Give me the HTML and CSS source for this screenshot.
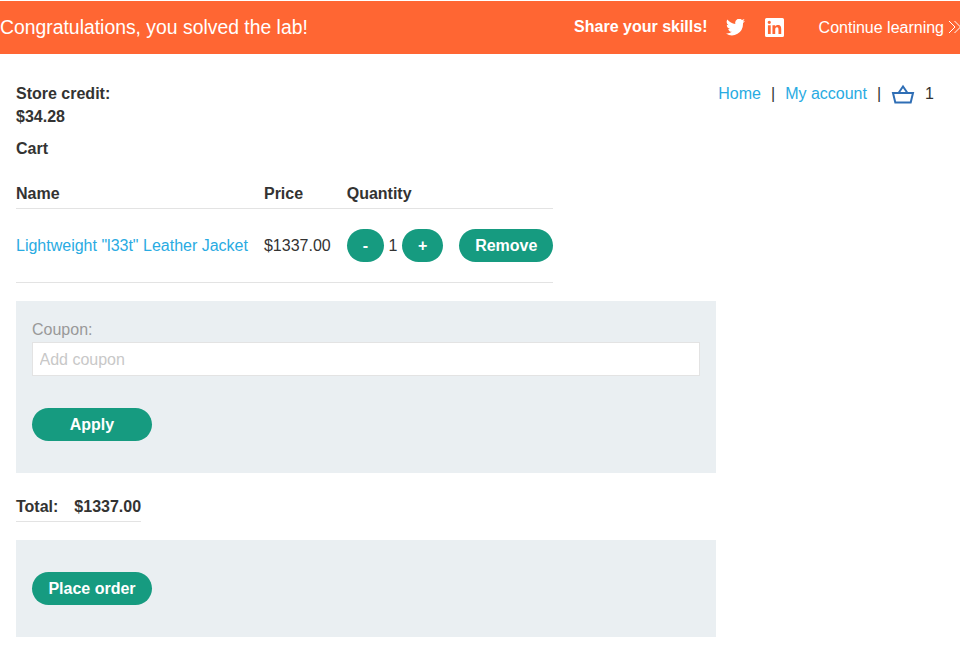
FILE: index.html
```
<!DOCTYPE html>
<html lang="en">
<head>
<meta charset="utf-8">
<title>Cart</title>
<link rel="stylesheet" href="styles.css">
</head>
<body>
<header class="banner">
  <p class="banner-title">Congratulations, you solved the lab!</p>
  <div class="share">
    <span class="share-label">Share your skills!</span>
    <a class="share-link" aria-label="Twitter"><svg class="twitter" viewBox="0 3 24 20" preserveAspectRatio="none"><path fill="#fff" d="M24 5a10 10 0 0 1-2.800.8A5 5 0 0 0 23.300 3.100a10 10 0 0 1-3.100 1.200 4.900 4.900 0 0 0-8.400 4.500A14 14 0 0 1 1.700 3.700a4.900 4.900 0 0 0 1.500 6.600 5 5 0 0 1-2.200-.6 4.900 4.900 0 0 0 4 4.900 5 5 0 0 1-2.200.1 4.900 4.900 0 0 0 4.600 3.400A9.900 9.900 0 0 1 0 20.100 14 14 0 0 0 21.500 7.600 10 10 0 0 0 24 5z"/></svg></a>
    <a class="share-link" aria-label="LinkedIn"><svg class="linkedin" viewBox="0 0 24 24"><path fill="#fff" fill-rule="evenodd" d="M2 0h20a2 2 0 0 1 2 2v20a2 2 0 0 1-2 2H2a2 2 0 0 1-2-2V2a2 2 0 0 1 2-2zM3.700 9v11.300h3.500V9zM5.400 3.400a2 2 0 1 0 0 4.100 2 2 0 0 0 0-4.100zM9.400 9v11.300h3.500v-5.600c0-1.500.4-2.900 2.200-2.900s1.900 1.600 1.900 3v5.500h3.500v-6.200c0-3-.6-5.400-4.200-5.400-1.700 0-2.900.9-3.400 1.900V9z"/></svg></a>
  </div>
  <a class="continue"><span>Continue learning</span><svg class="chevrons" viewBox="0 0 14 14"><path fill="none" stroke="#fff" stroke-width="1" d="M1 1l6 6-6 6M6.500 1l6 6-6 6"/></svg></a>
</header>
<main class="page">
  <div class="page-top">
    <div class="credit">Store credit:<br>$34.28</div>
    <nav class="nav">
      <a class="link">Home</a><span>|</span><a class="link">My account</a><span>|</span>
      <svg class="basket" viewBox="0 0 24 20"><path fill="none" stroke="#2f6eb5" stroke-width="2" d="M2 9h20l-2.300 9.500H4.300zM7.500 9L12 2.500l4.500 6.500"/></svg>
      <span class="basket-count">1</span>
    </nav>
  </div>
  <h1 class="title">Cart</h1>
  <table class="items">
    <thead><tr><th>Name</th><th>Price</th><th>Quantity</th><th></th></tr></thead>
    <tbody><tr>
      <td><a class="link">Lightweight "l33t" Leather Jacket</a></td>
      <td>$1337.00</td>
      <td><div class="quantity"><button class="button">-</button><span>1</span><button class="button">+</button></div></td>
      <td><button class="button remove">Remove</button></td>
    </tr></tbody>
  </table>
  <form class="panel">
    <label class="label" for="coupon">Coupon:</label>
    <input class="input" id="coupon" type="text" placeholder="Add coupon">
    <button class="button wide" type="button">Apply</button>
  </form>
  <div class="total"><span>Total:</span><span>$1337.00</span></div>
  <form class="panel order">
    <button class="button wide" type="button">Place order</button>
  </form>
</main>
</body>
</html>
```
FILE: styles.css
```
* { box-sizing: border-box; }
body {
  margin: 0;
  overflow: hidden;
  background: #fff;
  color: #333332;
  font: 16px/23px "Liberation Sans", Arial, sans-serif;
}
.banner {
  display: flex;
  align-items: center;
  height: 53px;
  margin-top: 1px;
  background: #ff6633;
  color: #fff;
  white-space: nowrap;
}
.banner-title { margin: 0 auto 0 0; font-size: 19.370px; }
.share { display: flex; align-items: center; }
.share-label { margin-right: 18.600px; padding-bottom: 2px; font-weight: bold; }
.share-link { display: block; }
.share-link svg { display: block; }
.twitter { width: 19px; height: 17px; margin-right: 20px; }
.linkedin { width: 19px; height: 19px; }
.continue { display: flex; align-items: center; margin: 0 -2px 0 34.500px; }
.chevrons { width: 14px; height: 14px; margin: -1px 0 0 4px; }
.page { padding: 28px 16px 0; }
.page-top { display: flex; justify-content: space-between; align-items: flex-start; }
.credit { font-weight: bold; }
.nav { display: flex; align-items: center; gap: 10px; margin-right: 10px; }
.basket { width: 24px; height: 20px; }
.link { color: #29abe2; text-decoration: none; }
.title { margin: 9px 0 0; font-size: 16px; line-height: 23px; }
.items { margin-top: 17px; border-collapse: collapse; }
.items th { padding: 5px 0 3px; text-align: left; }
.items th, .items td { padding-right: 16px; border-bottom: 1px solid #e3e3e3; }
.items td { padding-top: 20px; padding-bottom: 20px; padding-left: 0; }
.items th:last-child, .items td:last-child { padding-right: 0; }
.quantity { display: flex; align-items: center; gap: 4.500px; }
.button {
  display: block;
  height: 33px;
  padding: 0 16px;
  border: 0;
  border-radius: 17px;
  background: #169b80;
  color: #fff;
  font: bold 16px/33px "Liberation Sans", Arial, sans-serif;
}
.remove { width: 94px; padding: 0; }
.wide { width: 120px; }
.panel { width: 700px; height: 172px; margin: 18px 0 0; padding: 16px; background: #eaeff2; }
.label { display: block; height: 25px; line-height: 25px; color: #999; }
.input {
  display: block;
  width: 668px;
  height: 34px;
  margin-bottom: 32px;
  padding: 1px 6.500px 0;
  border: 1px solid #e3e3e3;
  font: inherit;
}
.input::placeholder { color: #c8c8c8; }
.total {
  display: flex;
  gap: 16px;
  width: max-content;
  margin-top: 22px;
  padding-bottom: 3px;
  border-bottom: 1px solid #e3e3e3;
  font-weight: bold;
}
.order { height: 97px; padding-top: 32px; }
```
